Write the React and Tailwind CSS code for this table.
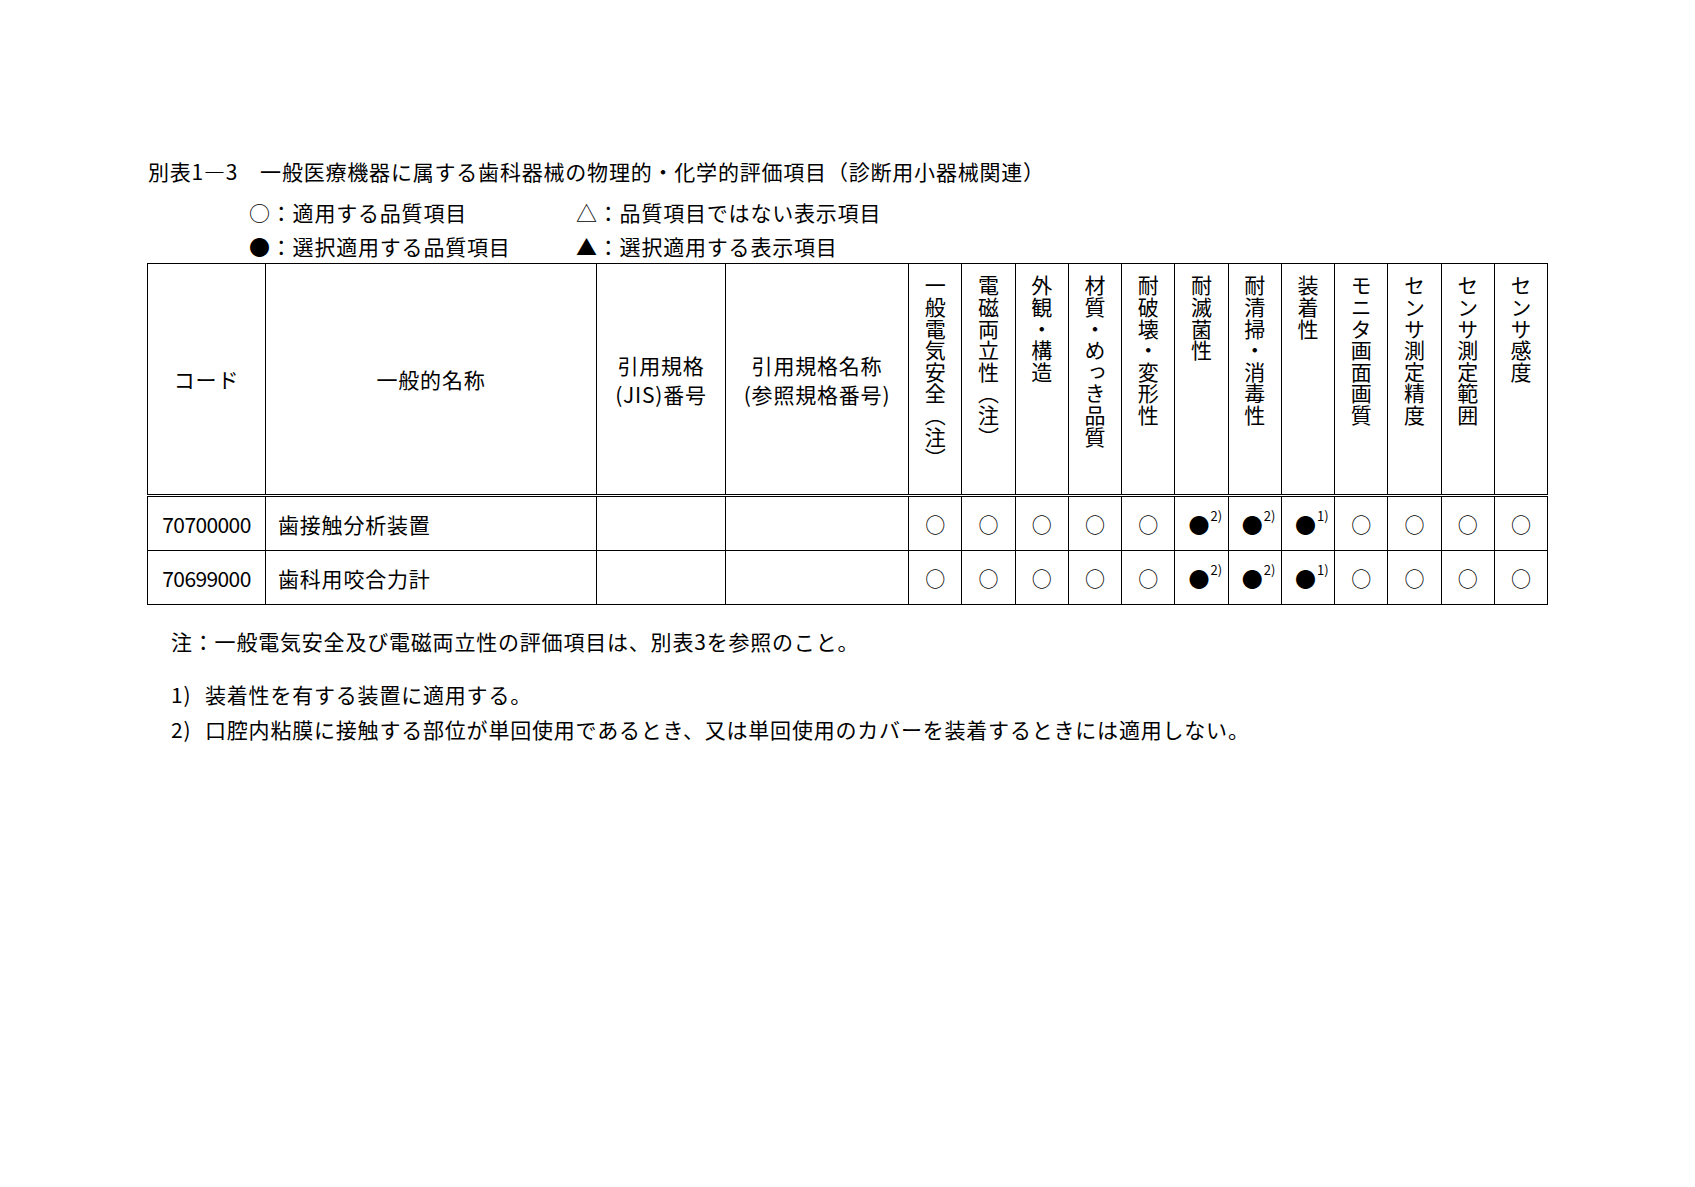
import React from 'react';

const HEADS = [
  '一般電気安全（注）',
  '電磁両立性（注）',
  '外観・構造',
  '材質・めっき品質',
  '耐破壊・変形性',
  '耐滅菌性',
  '耐清掃・消毒性',
  '装着性',
  'モニタ画面画質',
  'センサ測定精度',
  'センサ測定範囲',
  'センサ感度',
];

// 'o' = 適用, ['f', note] = 選択適用 with footnote
const MARKS = ['o', 'o', 'o', 'o', 'o', ['f', '2)'], ['f', '2)'], ['f', '1)'], 'o', 'o', 'o', 'o'];

const ROWS = [
  { code: '70700000', name: '歯接触分析装置' },
  { code: '70699000', name: '歯科用咬合力計' },
];

function Mark({ m }) {
  if (m === 'o') return <span className="text-[20px] leading-none tracking-normal">○</span>;
  return (
    <span className="inline-flex items-start pl-[8px] tracking-normal">
      <span className="text-[21px] leading-none">●</span>
      <span className="text-[13px] leading-none -mt-[5px] ml-[1px]">{m[1]}</span>
    </span>
  );
}

export default function App() {
  return (
    <div
      className="w-[1695px] h-[1187px] bg-white text-black text-[21px] leading-[24px] tracking-[0.8px]"
      style={{ fontFamily: '"Noto Sans CJK JP", "Noto Sans", sans-serif' }}
    >
      <div className="pt-[159px] pl-[147px]">
        <p className="pl-[1px] h-[24px] whitespace-nowrap">
          別表1―3　一般医療機器に属する歯科器械の物理的・化学的評価項目（診断用小器械関連）
        </p>

        <div className="mt-[17px] ml-[102px] grid grid-cols-[327px_auto] gap-y-[10px] whitespace-nowrap">
          <p>○：適用する品質項目</p>
          <p>△：品質項目ではない表示項目</p>
          <p>●：選択適用する品質項目</p>
          <p>▲：選択適用する表示項目</p>
        </div>

        <table className="mt-[5px] w-[1401px] table-fixed border-collapse border border-black">
          <colgroup>
            <col className="w-[118px]" />
            <col className="w-[331px]" />
            <col className="w-[129px]" />
            <col className="w-[183px]" />
            {HEADS.map((h) => (
              <col key={h} />
            ))}
          </colgroup>
          <thead>
            <tr className="h-[232px]">
              <th className="border border-black border-double border-b-[3px] font-normal text-center align-middle">
                コード
              </th>
              <th className="border border-black border-double border-b-[3px] font-normal text-center align-middle">
                一般的名称
              </th>
              <th className="border border-black border-double border-b-[3px] font-normal text-center align-middle leading-[29px] pt-[2px]">
                引用規格
                <br />
                (JIS)番号
              </th>
              <th className="border border-black border-double border-b-[3px] font-normal text-center align-middle leading-[29px] pt-[2px]">
                引用規格名称
                <br />
                (参照規格番号)
              </th>
              {HEADS.map((h) => (
                <th
                  key={h}
                  className="border border-black border-double border-b-[3px] font-normal text-center align-top pt-[11px]"
                >
                  <div className="inline-block text-start [writing-mode:vertical-rl] leading-[22px] tracking-[0.6px]">
                    {h}
                  </div>
                </th>
              ))}
            </tr>
          </thead>
          <tbody>
            {ROWS.map((r, i) => (
              <tr key={r.code} className={i === 0 ? 'h-[55px]' : 'h-[54px]'}>
                <td className="border border-black text-center align-middle tracking-[-0.6px]">{r.code}</td>
                <td className="border border-black align-middle pl-[12px]">{r.name}</td>
                <td className="border border-black" />
                <td className="border border-black" />
                {MARKS.map((m, j) => (
                  <td key={j} className="border border-black text-center align-middle">
                    <Mark m={m} />
                  </td>
                ))}
              </tr>
            ))}
          </tbody>
        </table>

        <div className="ml-[24px] whitespace-nowrap">
          <p className="mt-[24px]">注：一般電気安全及び電磁両立性の評価項目は、別表3を参照のこと。</p>
          <p className="mt-[29px] flex">
            <span className="w-[34px]">1)</span>
            <span>装着性を有する装置に適用する。</span>
          </p>
          <p className="mt-[11px] flex">
            <span className="w-[34px]">2)</span>
            <span>口腔内粘膜に接触する部位が単回使用であるとき、又は単回使用のカバーを装着するときには適用しない。</span>
          </p>
        </div>
      </div>
    </div>
  );
}
